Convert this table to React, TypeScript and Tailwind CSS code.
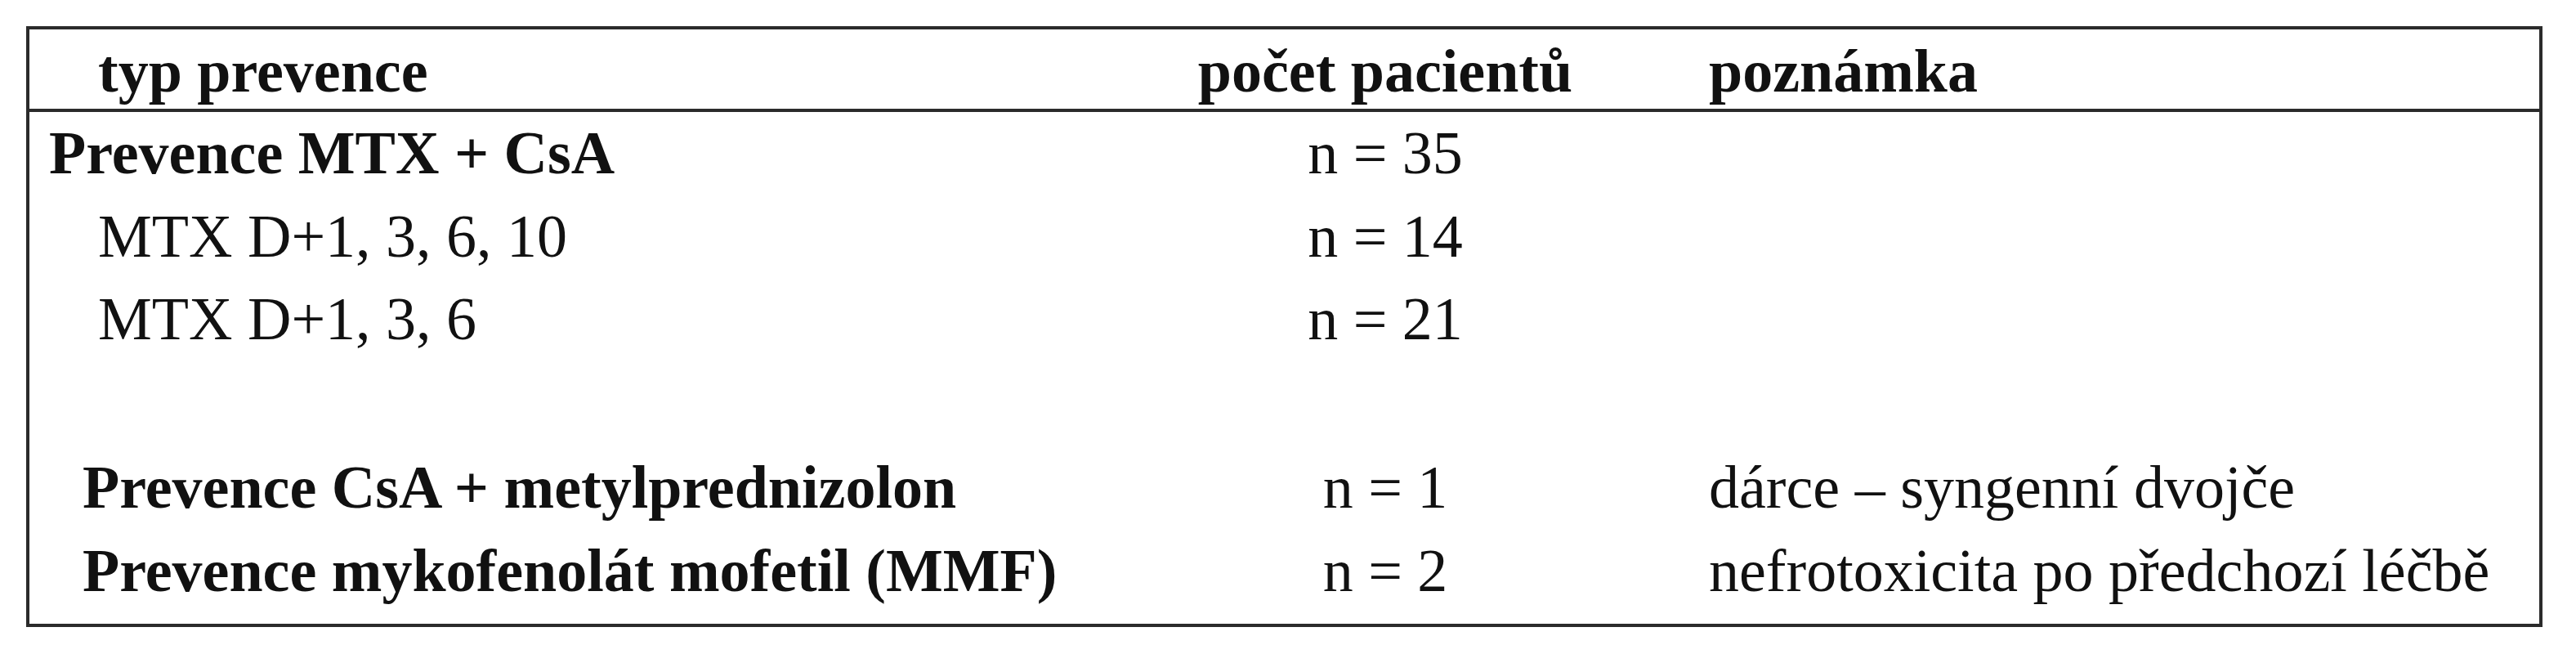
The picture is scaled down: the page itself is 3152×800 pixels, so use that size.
const rows = [
  { label: "Prevence MTX + CsA", indent: "pl-[24px]", bold: true, count: "n = 35", note: "" },
  { label: "MTX D+1, 3, 6, 10", indent: "pl-[84px]", bold: false, count: "n = 14", note: "" },
  { label: "MTX D+1, 3, 6", indent: "pl-[84px]", bold: false, count: "n = 21", note: "" },
  null,
  {
    label: "Prevence CsA + metylprednizolon",
    indent: "pl-[65px]",
    bold: true,
    count: "n = 1",
    note: "dárce – syngenní dvojče",
  },
  {
    label: "Prevence mykofenolát mofetil (MMF)",
    indent: "pl-[65px]",
    bold: true,
    count: "n = 2",
    note: "nefrotoxicita po předchozí léčbě",
  },
];

const cols = "grid grid-cols-[1263px_792px_1fr]";

export default function App() {
  return (
    <div className="min-h-[800px] w-[3152px] bg-white p-[32px] font-['Liberation_Serif',serif] text-[74px] text-[#111]">
      <div className="w-[3079px] border-[4px] border-[#2b2b2b]">
        {/* header */}
        <div className={`${cols} h-[97px] whitespace-nowrap pt-[1px] font-bold leading-[101px]`}>
          <div className="pl-[84px]">typ prevence</div>
          <div className="text-center">počet pacientů</div>
          <div>poznámka</div>
        </div>
        <div className="h-[4px] bg-[#2b2b2b]" />
        {/* body */}
        <div className="pb-[14px]">
          {rows.map((row, i) =>
            row ? (
              <div key={i} className={`${cols} h-[101.5px] whitespace-nowrap leading-[101.5px]`}>
                <div className={`${row.indent} ${row.bold ? "font-bold" : ""}`}>{row.label}</div>
                <div className="text-center">{row.count}</div>
                <div>{row.note}</div>
              </div>
            ) : (
              <div key={i} className="h-[104.5px]" />
            ),
          )}
        </div>
      </div>
    </div>
  );
}
